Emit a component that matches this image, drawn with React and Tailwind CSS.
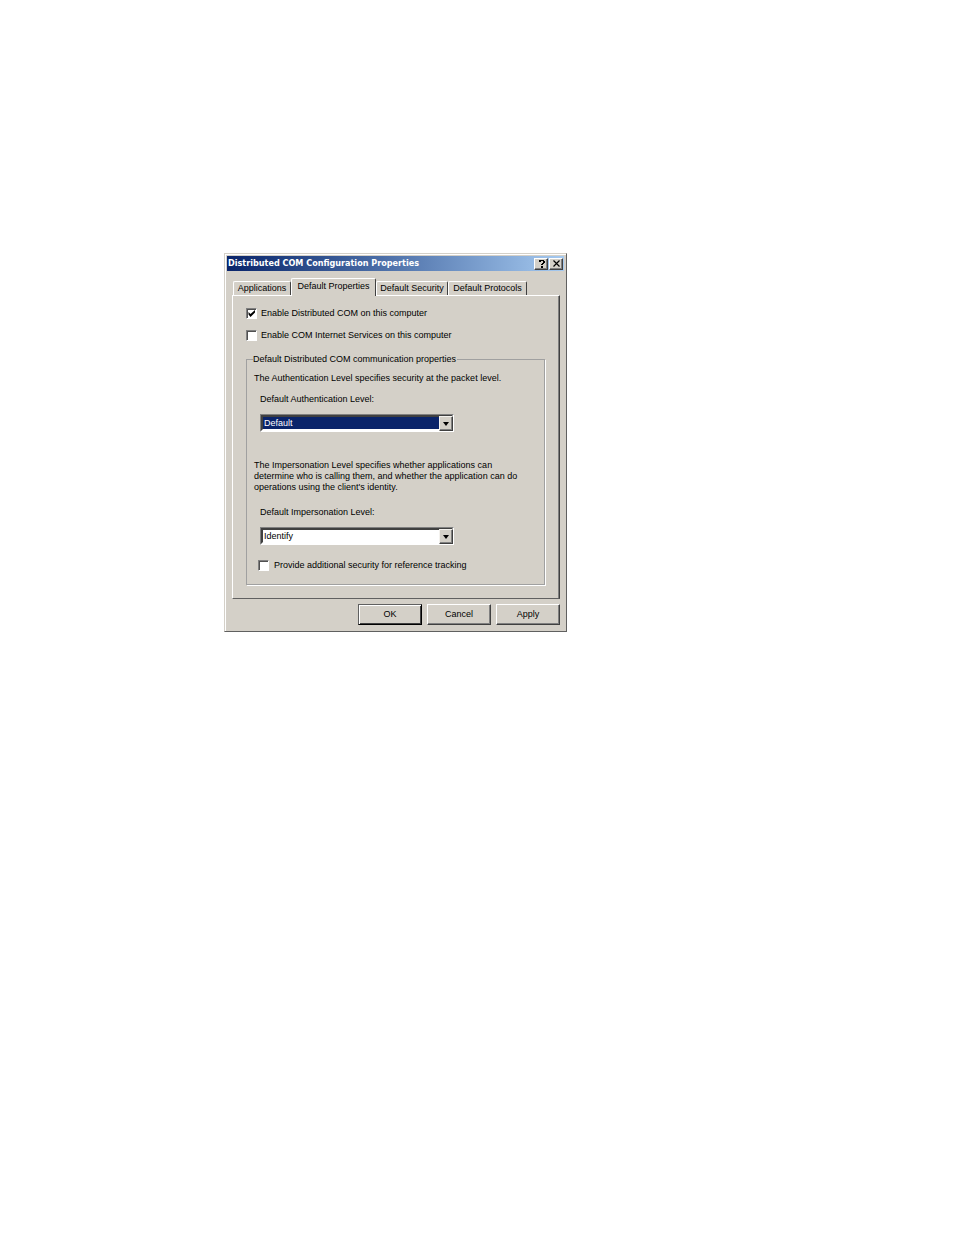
import { useState } from 'react'

const tabs = [
  { name: 'Applications', width: 'w-[58px]' },
  { name: 'Default Properties', width: 'w-[85px]' },
  { name: 'Default Security', width: 'w-[72px]' },
  { name: 'Default Protocols', width: 'w-[79px]' },
]

const authLevels = ['Default', 'None', 'Connect', 'Call', 'Packet']
const impersonationLevels = ['Identify', 'Anonymous', 'Impersonate', 'Delegate']

function CheckRow({ id, label, defaultChecked = false, gap = 'gap-1' }) {
  return (
    <div className={`flex h-3 items-center ${gap}`}>
      <span className="relative block h-[11px] w-[11px]">
        <input
          id={id}
          type="checkbox"
          defaultChecked={defaultChecked}
          className="peer block h-[11px] w-[11px] appearance-none border border-t-[#808080] border-r-white border-b-white border-l-[#808080] bg-white shadow-[inset_1px_1px_0_#505050]"
        />
        <svg
          viewBox="0 0 11 11"
          className="pointer-events-none absolute inset-0 hidden h-[11px] w-[11px] peer-checked:block"
        >
          <path d="M2.5 4v2.5L4.5 9 9 4.5V2L4.5 6z" fill="#000" />
        </svg>
      </span>
      <label htmlFor={id} className="whitespace-nowrap">
        {label}
      </label>
    </div>
  )
}

function LevelSelect({ id, options, active = false }) {
  return (
    <div className="relative w-[194px] border border-t-[#808080] border-r-white border-b-white border-l-[#808080] bg-white">
      <select
        id={id}
        className={
          active
            ? 'block h-4 w-full appearance-none border-2 border-white border-t-[#404040] border-l-[#404040] bg-[#0a246a] px-px leading-3 text-white outline-none'
            : 'block h-4 w-full appearance-none border-2 border-white border-t-[#404040] border-l-[#404040] bg-white px-px leading-3 text-black outline-none'
        }
      >
        {options.map((option) => (
          <option key={option}>{option}</option>
        ))}
      </select>
      <span className="pointer-events-none absolute top-px right-0 bottom-0 flex w-[14px] items-center justify-center border border-t-[#f4f2ee] border-r-[#404040] border-b-[#404040] border-l-[#f4f2ee] bg-[#d4d0c8] shadow-[inset_-1px_-1px_0_#808080]">
        <svg viewBox="0 0 6 4" className="h-1 w-[6px]">
          <path d="M0 0h6L3 4z" fill="#000" />
        </svg>
      </span>
    </div>
  )
}

function CaptionButton({ label, children }) {
  return (
    <button
      type="button"
      aria-label={label}
      className="flex h-3 w-[14px] items-center justify-center border border-t-white border-r-[#404040] border-b-[#404040] border-l-white bg-[#d4d0c8] shadow-[inset_-1px_-1px_0_#808080]"
    >
      {children}
    </button>
  )
}

function DialogButton({ children, primary = false }) {
  return (
    <button
      type="button"
      className={
        primary
          ? 'h-[21px] w-16 border border-t-[#606060] border-r-black border-b-black border-l-[#606060] bg-[#d4d0c8] shadow-[inset_1px_1px_0_#fff,inset_-1px_-1px_0_#404040]'
          : 'h-[21px] w-16 border border-t-white border-r-[#404040] border-b-[#404040] border-l-white bg-[#d4d0c8] shadow-[inset_-1px_-1px_0_#808080]'
      }
    >
      {children}
    </button>
  )
}

function App() {
  const [tab, setTab] = useState('Default Properties')

  return (
    <main className="min-h-screen bg-white px-56 pt-[253px] pb-10 font-['Liberation_Sans',Arial,sans-serif] text-[9px] leading-[11px] text-black">
      <section className="w-full max-w-[343px] min-w-[343px] border border-t-[#d4d0c8] border-r-[#606060] border-b-[#606060] border-l-[#d4d0c8] bg-[#d4d0c8] px-px pt-px pb-[6px] shadow-[inset_1px_1px_0_#fff]">
        <header className="mx-px mt-px flex h-[15px] items-center bg-linear-to-r from-[#0a246a] to-[#a6caf0] pr-px pl-px">
          <h1 className="flex-1 font-['DejaVu_Sans_Condensed','DejaVu_Sans',sans-serif] text-[9px] font-bold whitespace-nowrap text-white">
            Distributed COM Configuration Properties
          </h1>
          <div className="flex gap-px">
            <CaptionButton label="Help">
              <svg viewBox="0 0 7 8" className="h-2 w-[7px]">
                <path d="M1 0h5v1h1v2H6v1H5v1H3V4h1V3h1V1H3v1H1zM3 6h2v2H3z" fill="#000" />
              </svg>
            </CaptionButton>
            <CaptionButton label="Close">
              <svg viewBox="0 0 7 7" className="h-[7px] w-[7px]">
                <path d="M0.5 0.5l6 6M6.5 0.5l-6 6" stroke="#000" strokeWidth="1.2" />
              </svg>
            </CaptionButton>
          </div>
        </header>

        <div className="mt-[7px] pr-[5px] pl-[6px]">
          <div role="tablist" className="flex h-[17px] items-end pl-px">
            {tabs.map(({ name, width }) => (
              <button
                key={name}
                type="button"
                role="tab"
                aria-selected={tab === name}
                onClick={() => setTab(name)}
                className={`${width} shrink-0 rounded-t-[2px] border-t border-r border-l border-t-white border-r-[#404040] border-l-white whitespace-nowrap ${
                  tab === name ? 'z-10 -mb-px h-[18px] bg-[#d4d0c8] pb-[2px]' : 'h-[14px]'
                }`}
              >
                {name}
              </button>
            ))}
          </div>

          <div
            role="tabpanel"
            className="border border-t-white border-r-[#404040] border-b-[#606060] border-l-white pt-[11px] pr-[14px] pb-[13px] pl-[13px] shadow-[inset_-1px_0_0_#808080]"
          >
            <div className="flex flex-col gap-[10px]">
              <CheckRow id="enable-dcom" label="Enable Distributed COM on this computer" defaultChecked />
              <CheckRow id="enable-internet" label="Enable COM Internet Services on this computer" />
            </div>

            <fieldset className="mt-[13px] border border-[#a0a0a0] px-[6px] pb-[13px] shadow-[1px_1px_0_#fff]">
              <legend className="pr-px">Default Distributed COM communication properties</legend>
              <p className="mt-2 pl-px">The Authentication Level specifies security at the packet level.</p>
              <div className="mt-[10px] pl-[7px]">
                <label htmlFor="auth-level" className="block">
                  Default Authentication Level:
                </label>
                <div className="mt-[9px]">
                  <LevelSelect id="auth-level" options={authLevels} active />
                </div>
              </div>

              <p className="mt-7 pl-px">
                The Impersonation Level specifies whether applications can
                <br />
                determine who is calling them, and whether the application can do
                <br />
                operations using the client&apos;s identity.
              </p>
              <div className="mt-[14px] pl-[7px]">
                <label htmlFor="impersonation-level" className="block">
                  Default Impersonation Level:
                </label>
                <div className="mt-[9px]">
                  <LevelSelect id="impersonation-level" options={impersonationLevels} />
                </div>
              </div>

              <div className="mt-[14px] pl-[5px]">
                <CheckRow
                  id="reference-tracking"
                  label="Provide additional security for reference tracking"
                  gap="gap-[5px]"
                />
              </div>
            </fieldset>
          </div>

          <footer className="mt-[5px] flex justify-end gap-[5px]">
            <DialogButton primary>OK</DialogButton>
            <DialogButton>Cancel</DialogButton>
            <DialogButton>Apply</DialogButton>
          </footer>
        </div>
      </section>
    </main>
  )
}

export default App
